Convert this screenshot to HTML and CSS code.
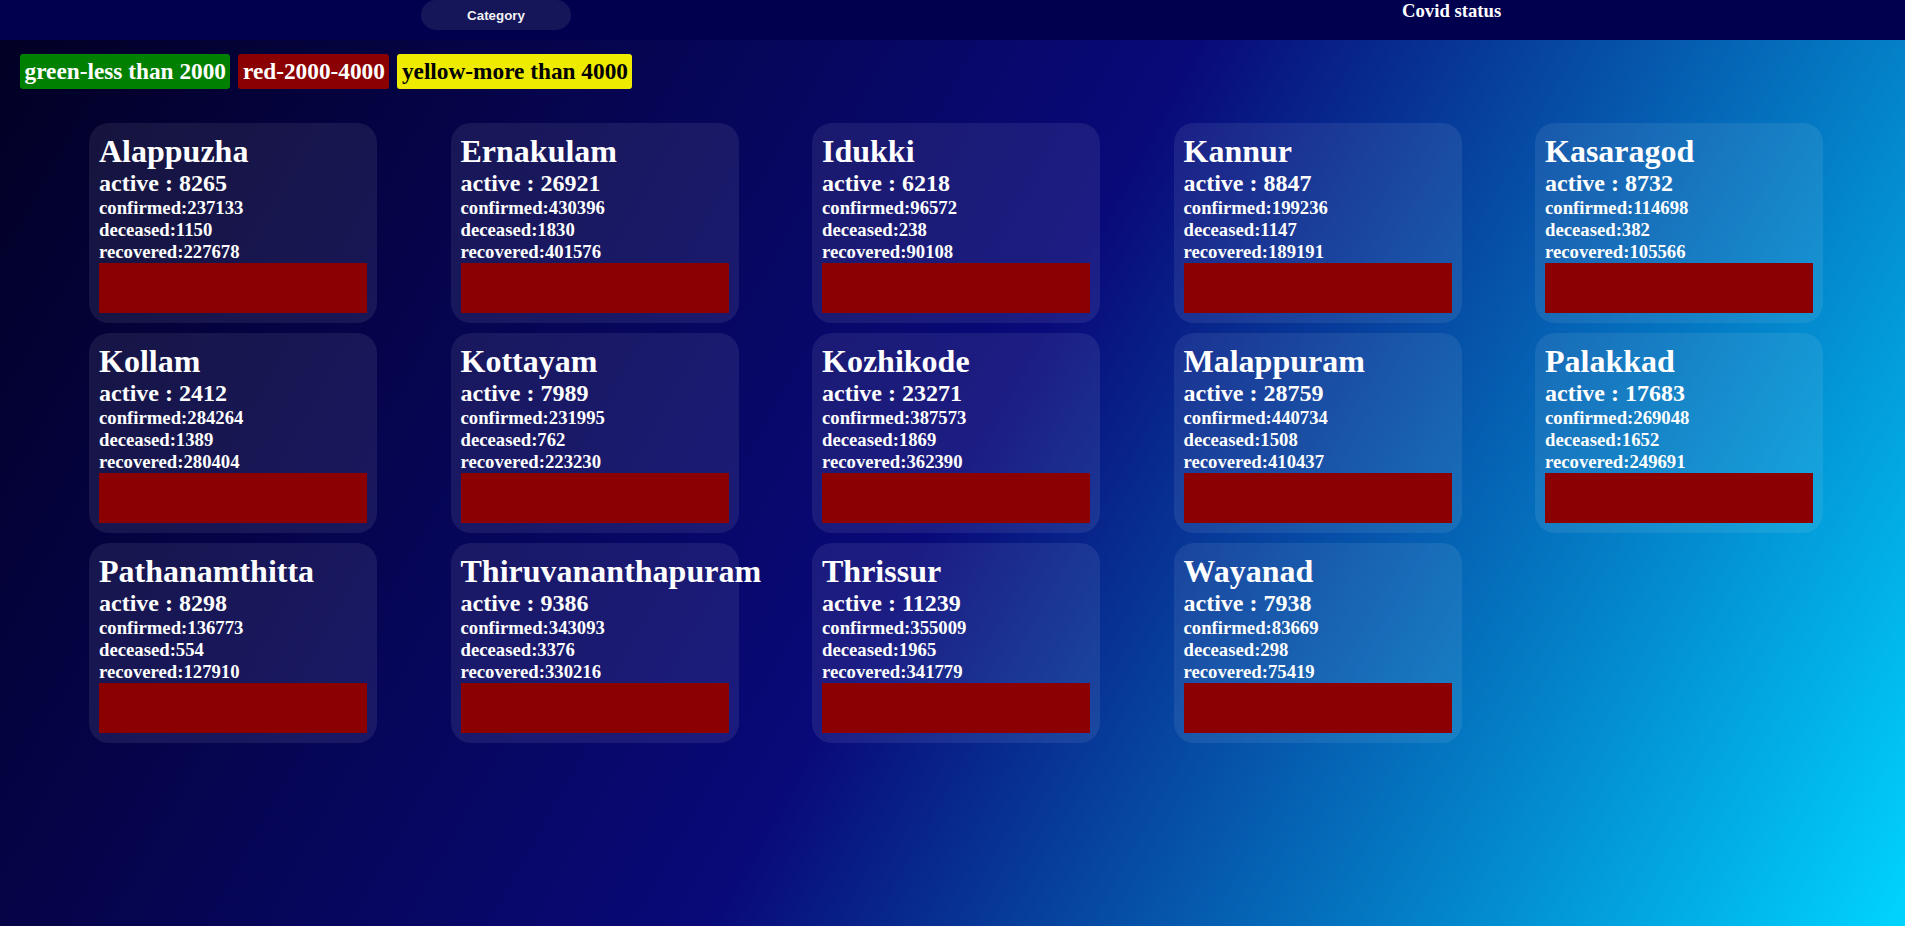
FILE: index.html
```html
<!DOCTYPE html>
<html lang="en">
<head>
<meta charset="utf-8">
<title>Covid status</title>
<link rel="stylesheet" href="styles.css">
</head>
<body>
<header class="topbar">
  <button class="category-btn">Category</button>
  <h3 class="title">Covid status</h3>
</header>
<main class="main">
  <div class="legend">
    <h2 class="legend-item legend-green">green-less than 2000</h2>
    <h2 class="legend-item legend-red">red-2000-4000</h2>
    <h2 class="legend-item legend-yellow">yellow-more than 4000</h2>
  </div>
  <div class="grid">
    <div class="card"><h1>Alappuzha</h1><h2>active : 8265</h2><h3>confirmed:237133</h3><h3>deceased:1150</h3><h3>recovered:227678</h3><div class="bar"></div></div>
    <div class="card"><h1>Ernakulam</h1><h2>active : 26921</h2><h3>confirmed:430396</h3><h3>deceased:1830</h3><h3>recovered:401576</h3><div class="bar"></div></div>
    <div class="card"><h1>Idukki</h1><h2>active : 6218</h2><h3>confirmed:96572</h3><h3>deceased:238</h3><h3>recovered:90108</h3><div class="bar"></div></div>
    <div class="card"><h1>Kannur</h1><h2>active : 8847</h2><h3>confirmed:199236</h3><h3>deceased:1147</h3><h3>recovered:189191</h3><div class="bar"></div></div>
    <div class="card"><h1>Kasaragod</h1><h2>active : 8732</h2><h3>confirmed:114698</h3><h3>deceased:382</h3><h3>recovered:105566</h3><div class="bar"></div></div>
    <div class="card"><h1>Kollam</h1><h2>active : 2412</h2><h3>confirmed:284264</h3><h3>deceased:1389</h3><h3>recovered:280404</h3><div class="bar"></div></div>
    <div class="card"><h1>Kottayam</h1><h2>active : 7989</h2><h3>confirmed:231995</h3><h3>deceased:762</h3><h3>recovered:223230</h3><div class="bar"></div></div>
    <div class="card"><h1>Kozhikode</h1><h2>active : 23271</h2><h3>confirmed:387573</h3><h3>deceased:1869</h3><h3>recovered:362390</h3><div class="bar"></div></div>
    <div class="card"><h1>Malappuram</h1><h2>active : 28759</h2><h3>confirmed:440734</h3><h3>deceased:1508</h3><h3>recovered:410437</h3><div class="bar"></div></div>
    <div class="card"><h1>Palakkad</h1><h2>active : 17683</h2><h3>confirmed:269048</h3><h3>deceased:1652</h3><h3>recovered:249691</h3><div class="bar"></div></div>
    <div class="card"><h1>Pathanamthitta</h1><h2>active : 8298</h2><h3>confirmed:136773</h3><h3>deceased:554</h3><h3>recovered:127910</h3><div class="bar"></div></div>
    <div class="card"><h1>Thiruvananthapuram</h1><h2>active : 9386</h2><h3>confirmed:343093</h3><h3>deceased:3376</h3><h3>recovered:330216</h3><div class="bar"></div></div>
    <div class="card"><h1>Thrissur</h1><h2>active : 11239</h2><h3>confirmed:355009</h3><h3>deceased:1965</h3><h3>recovered:341779</h3><div class="bar"></div></div>
    <div class="card"><h1>Wayanad</h1><h2>active : 7938</h2><h3>confirmed:83669</h3><h3>deceased:298</h3><h3>recovered:75419</h3><div class="bar"></div></div>
  </div>
</main>
</body>
</html>
```
FILE: styles.css
```css
html, body {
  margin: 0;
  padding: 0;
  height: 100%;
}
body {
  display: flex;
  flex-direction: column;
  font-family: "Liberation Serif", "Times New Roman", serif;
  color: #fff;
  overflow: hidden;
}
.topbar {
  height: 40px;
  flex: 0 0 40px;
  background: #00004f;
  display: flex;
  align-items: flex-start;
  padding-left: 421px;
  box-sizing: border-box;
}
.category-btn {
  width: 150px;
  height: 30px;
  border: none;
  border-radius: 15px;
  background: #15155a;
  color: #f2f2f2;
  font-family: "Liberation Sans", Arial, sans-serif;
  font-weight: bold;
  font-size: 13.333px;
  padding: 0;
  margin: 0;
}
.title {
  margin: 0 0 0 831px;
  font-size: 18.72px;
  font-weight: bold;
  line-height: normal;
  color: #fff;
}
.main {
  flex: 1;
  background: linear-gradient(119deg, #020024 0%, #090979 50%, #00d4ff 100%);
  padding-top: 14px;
}
.legend {
  display: flex;
  gap: 8px;
  margin-left: 20px;
}
.legend-item {
  margin: 0;
  font-size: 23.3px;
  font-weight: bold;
  line-height: normal;
  padding: 4px 4.5px;
  border-radius: 3px;
}
.legend-green { background: #008000; color: #fff; }
.legend-red { background: #8b0000; color: #fff; }
.legend-yellow { background: #efeb00; color: #000; }
.grid {
  display: grid;
  grid-template-columns: repeat(5, 288px);
  column-gap: 73.5px;
  row-gap: 10px;
  margin-top: 34px;
  padding-left: 89px;
}
.card {
  width: 288px;
  box-sizing: border-box;
  padding: 10px;
  border-radius: 20px;
  background: rgba(255, 255, 255, 0.08);
}
.card h1, .card h2, .card h3 {
  margin: 0;
  font-weight: bold;
  line-height: normal;
  white-space: nowrap;
}
.card h1 { font-size: 32px; }
.card h2 { font-size: 24px; }
.card h3 { font-size: 18.72px; }
.bar {
  height: 50px;
  background: #8b0000;
}
```
